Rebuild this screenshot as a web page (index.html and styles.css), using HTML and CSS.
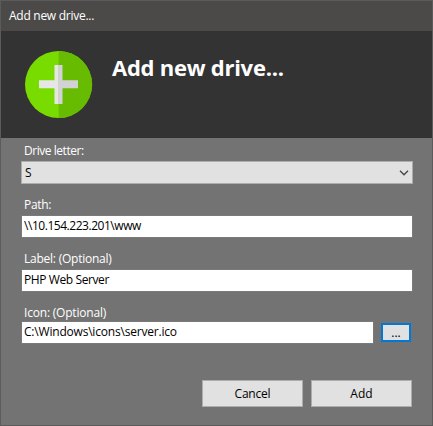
FILE: index.html
```html
<!DOCTYPE html>
<html lang="en">
<head>
<meta charset="utf-8">
<title>Add new drive...</title>
<link rel="stylesheet" href="styles.css">
</head>
<body>
<div class="window">
  <div class="titlebar"><span class="t-title">Add new drive...</span></div>
  <header class="header">
    <svg class="logo" width="69" height="69" viewBox="0 0 69 69">
      <circle cx="34.500" cy="34.500" r="33.500" fill="#78dc00"/>
      <path d="M34.700 1a33.500 33.500 0 0 1 0 67z" fill="#67bb00"/>
      <path d="M30.500 15h4.200v39h-4.200V38.300H15V30.300h15.500z" fill="#e6e6e6"/>
      <path d="M34.500 15h4v15.300H54v8H38.500V54h-4z" fill="#d2d2d6"/>
    </svg>
    <h1 class="heading">Add new drive...</h1>
  </header>
  <main class="body">
    <div class="field">
      <div class="label"><span class="t-letter">Drive letter:</span></div>
      <div class="box select"><span>S</span>
        <svg width="10" height="6" viewBox="0 0 10 6"><path d="M1 .8l4 4 4-4" fill="none" stroke="#444" stroke-width="1.300"/></svg>
      </div>
    </div>
    <div class="field">
      <div class="label"><span class="t-path">Path:</span></div>
      <div class="box"><span class="t-ip">\\10.154.223.201\www</span></div>
    </div>
    <div class="field">
      <div class="label"><span class="t-label">Label: (Optional)</span></div>
      <div class="box"><span class="t-server">PHP Web Server</span></div>
    </div>
    <div class="field">
      <div class="label"><span class="t-icon">Icon: (Optional)</span></div>
      <div class="row">
        <div class="box grow"><span class="t-file">C:\Windows\icons\server.ico</span></div>
        <button class="browse">...</button>
      </div>
    </div>
    <div class="actions">
      <button class="btn"><span class="t-cancel">Cancel</span></button>
      <button class="btn"><span>Add</span></button>
    </div>
  </main>
</div>
</body>
</html>
```
FILE: styles.css
```css
* { box-sizing: border-box; }
body {
  margin: 0;
  font: 12px/16px "Open Sans", "Noto Sans", sans-serif;
  color: #000;
}
.window {
  width: 433px;
  height: 426px;
  border: 1px solid #5b5b5b;
  background: #737373;
  overflow: hidden;
  white-space: nowrap;
}
.titlebar {
  height: 30px;
  padding: 7px 0 0 8px;
  background: #4c4a48;
  color: #fff;
}
.header {
  display: flex;
  height: 107px;
  padding: 19px 0 0 23px;
  background: #333;
  color: #fff;
}
.heading {
  margin: 2px 0 0 19px;
  font-size: 22px;
  line-height: 30px;
  font-weight: 700;
  letter-spacing: -.25px;
}
.body { padding: 5px 19px 0 20px; }
.field { height: 54px; }
.label {
  height: 18px;
  padding-left: 3px;
  color: #fff;
}
.box {
  height: 23px;
  padding: 2px 0 0 2px;
  border: 1px solid #7a7a7a;
  background: #fff;
}
.select {
  display: flex;
  justify-content: space-between;
  padding: 3px 3px 0 3px;
  border-color: #adadad;
  background: #e1e1e1;
}
.select svg { margin-top: 5px; }
.field:nth-child(n+4) .label { height: 16px; }
.t-title { letter-spacing: -.27px; }
.t-letter { letter-spacing: -.46px; }
.t-path { letter-spacing: -.3px; }
.t-ip { letter-spacing: -.46px; }
.t-label { letter-spacing: -.24px; }
.t-server { letter-spacing: -.4px; }
.t-icon { letter-spacing: -.2px; }
.t-file { letter-spacing: -.2px; }
.t-cancel { letter-spacing: -.2px; }
.row { display: flex; }
.grow { width: 353px; }
button {
  padding: 0;
  font: inherit;
  color: #000;
  background: #e1e1e1;
  border: 1px solid #adadad;
}
.browse {
  width: 30px;
  height: 19px;
  margin: 2px 0 0 7px;
  border: 2px solid #0078d7;
  line-height: 15px;
}
.actions {
  display: flex;
  justify-content: flex-end;
  gap: 8px;
  padding: 21px 1px 0 0;
}
.btn { width: 101px; height: 27px; }
```
